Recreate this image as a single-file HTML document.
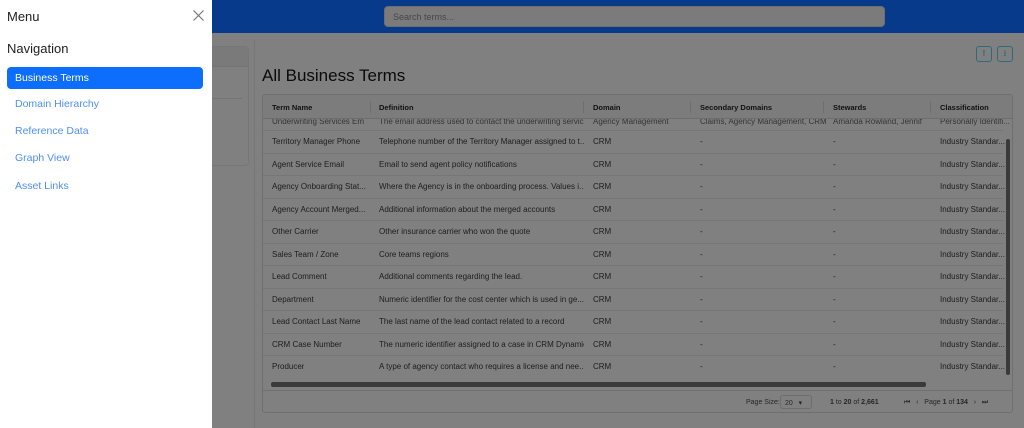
<!DOCTYPE html>
<html><head><meta charset="utf-8"><style>
*{box-sizing:border-box;margin:0;padding:0}
body{width:1024px;height:428px;overflow:hidden;position:relative;font-family:"Liberation Sans",sans-serif;background:#808080;color:#111}
.hdr{position:absolute;left:0;top:0;width:1024px;height:33px;background:#073a8a}
.search{position:absolute;left:384px;top:6px;width:501px;height:21px;background:#7b7b7b;border-radius:4px;border:1px solid #6e6e6e;font-size:9px;color:#474747;padding:5px 8px}
.lcard{position:absolute;left:150px;top:46px;width:99px;height:120px;border:1px solid #777;border-radius:4px;background:#808080}
.lcard .h{height:20px;background:#7a7a7a;border-bottom:1px solid #757575}
.lcard .b{margin:4px 6px 0 0;height:28px;border-bottom:1px solid #747474}
.vline{position:absolute;left:254px;top:40px;width:1px;height:388px;background:#777}
.btn{position:absolute;top:46px;width:16px;height:16px;border:1.5px solid #2d6b7c;border-radius:3px;color:#2d6b7c;font-size:9px;text-align:center;line-height:13px}
h1{position:absolute;left:262px;top:66px;font-size:17px;font-weight:normal;color:#0a0a0a}
.tbl{position:absolute;left:262px;top:94px;width:751px;height:319px;border:1px solid #6f6f6f;border-radius:3px;background:#808080;overflow:hidden}
.th{position:absolute;top:0;left:0;right:0;height:24px;background:#7c7c7c;border-bottom:1px solid #6d6d6d;font-size:7.5px;font-weight:bold;color:#111;z-index:2}
.th span,.row span{position:absolute;top:8px;white-space:nowrap;overflow:hidden}
.row{position:absolute;left:0;width:740px;height:22.5px;border-bottom:1px solid #767676;font-size:8px;color:#1c1c1c}
.row span{top:6px}
.row span:nth-child(2){width:205px}
.sep{position:absolute;top:6px;width:1px;height:12px;background:#6e6e6e}
.hs{position:absolute;left:8px;top:287px;width:655px;height:5px;background:#3a3a3a;border-radius:2px}
.vs{position:absolute;left:743px;top:44px;width:4px;height:236px;background:#3a3a3a;border-radius:2px}
.foot{position:absolute;left:0;right:0;top:295px;height:24px;border-top:1px solid #707070;font-size:7px;color:#262626}
.foot span{position:absolute;top:8px;white-space:nowrap}
.side{position:absolute;left:0;top:0;width:212px;height:428px;background:#fff}
.side .t{position:absolute;left:7px;top:9px;font-size:13px;color:#222}
.side .x{position:absolute;left:193px;top:10px;width:11px;height:11px}
.side .n{position:absolute;left:7px;top:41px;font-size:13px;color:#222}
.act{position:absolute;left:7px;top:67px;width:196px;height:22px;background:#0d6efd;border-radius:4px;color:#fff;font-size:10.5px;padding:5px 8px}
.lk{position:absolute;left:15px;font-size:10.5px;color:#4f8ff7}
</style></head><body>
<div class="hdr"></div>
<div class="search">Search terms...</div>
<div class="lcard"><div class="h"></div><div class="b"></div></div>
<div class="vline"></div>
<div class="btn" style="left:976px">⭱</div>
<div class="btn" style="left:997px">⭳</div>
<h1>All Business Terms</h1>
<div class="tbl">
<div class="th"><span style="left:9px">Term Name</span><span style="left:116px">Definition</span><span style="left:330px">Domain</span><span style="left:437px">Secondary Domains</span><span style="left:570px">Stewards</span><span style="left:677px">Classification</span>
<i class="sep" style="left:107px"></i><i class="sep" style="left:320px"></i><i class="sep" style="left:427px"></i><i class="sep" style="left:560px"></i><i class="sep" style="left:667px"></i></div>
<div class="row" style="top:13px;color:#333"><span style="left:9px;top:9px">Underwriting Services Em</span><span style="left:116px;top:9px">The email address used to contact the underwriting servic</span><span style="left:330px;top:9px">Agency Management</span><span style="left:437px;top:9px">Claims, Agency Management, CRM</span><span style="left:570px;top:9px">Amanda Rowland, Jennif</span><span style="left:677px;top:9px">Personally Identifi...</span></div>
<div class="row" style="top:36px"><span style="left:9px">Territory Manager Phone</span><span style="left:116px">Telephone number of the Territory Manager assigned to t...</span><span style="left:330px">CRM</span><span style="left:437px">-</span><span style="left:570px">-</span><span style="left:677px">Industry Standar...</span></div>
<div class="row" style="top:58.5px"><span style="left:9px">Agent Service Email</span><span style="left:116px">Email to send agent policy notifications</span><span style="left:330px">CRM</span><span style="left:437px">-</span><span style="left:570px">-</span><span style="left:677px">Industry Standar...</span></div>
<div class="row" style="top:81px"><span style="left:9px">Agency Onboarding Stat...</span><span style="left:116px">Where the Agency is in the onboarding process. Values i...</span><span style="left:330px">CRM</span><span style="left:437px">-</span><span style="left:570px">-</span><span style="left:677px">Industry Standar...</span></div>
<div class="row" style="top:103.5px"><span style="left:9px">Agency Account Merged...</span><span style="left:116px">Additional information about the merged accounts</span><span style="left:330px">CRM</span><span style="left:437px">-</span><span style="left:570px">-</span><span style="left:677px">Industry Standar...</span></div>
<div class="row" style="top:126px"><span style="left:9px">Other Carrier</span><span style="left:116px">Other insurance carrier who won the quote</span><span style="left:330px">CRM</span><span style="left:437px">-</span><span style="left:570px">-</span><span style="left:677px">Industry Standar...</span></div>
<div class="row" style="top:148.5px"><span style="left:9px">Sales Team / Zone</span><span style="left:116px">Core teams regions</span><span style="left:330px">CRM</span><span style="left:437px">-</span><span style="left:570px">-</span><span style="left:677px">Industry Standar...</span></div>
<div class="row" style="top:171px"><span style="left:9px">Lead Comment</span><span style="left:116px">Additional comments regarding the lead.</span><span style="left:330px">CRM</span><span style="left:437px">-</span><span style="left:570px">-</span><span style="left:677px">Industry Standar...</span></div>
<div class="row" style="top:193.5px"><span style="left:9px">Department</span><span style="left:116px">Numeric identifier for the cost center which is used in ge...</span><span style="left:330px">CRM</span><span style="left:437px">-</span><span style="left:570px">-</span><span style="left:677px">Industry Standar...</span></div>
<div class="row" style="top:216px"><span style="left:9px">Lead Contact Last Name</span><span style="left:116px">The last name of the lead contact related to a record</span><span style="left:330px">CRM</span><span style="left:437px">-</span><span style="left:570px">-</span><span style="left:677px">Industry Standar...</span></div>
<div class="row" style="top:238.5px"><span style="left:9px">CRM Case Number</span><span style="left:116px">The numeric identifier assigned to a case in CRM Dynamics</span><span style="left:330px">CRM</span><span style="left:437px">-</span><span style="left:570px">-</span><span style="left:677px">Industry Standar...</span></div>
<div class="row" style="top:261px;border-bottom:none"><span style="left:9px">Producer</span><span style="left:116px">A type of agency contact who requires a license and nee...</span><span style="left:330px">CRM</span><span style="left:437px">-</span><span style="left:570px">-</span><span style="left:677px">Industry Standar...</span></div>
<div class="vs"></div><div class="hs"></div>
<div class="foot"><span style="left:483px">Page Size:</span><span style="left:517px;top:4px;width:32px;height:14px;border:1px solid #6e6e6e;border-radius:3px;padding:3px 4px">20 &nbsp;&nbsp;▾</span><span style="left:567px"><b>1</b> to <b>20</b> of <b>2,661</b></span><span style="left:641px">⏮ &nbsp; ‹ &nbsp; Page <b>1</b> of <b>134</b> &nbsp; › &nbsp; ⏭</span></div>
</div>
<div class="side">
<div class="t">Menu</div>
<svg class="x" viewBox="0 0 11 11"><path d="M0.5 0.5L10.5 10.5M10.5 0.5L0.5 10.5" stroke="#777" stroke-width="1.2"/></svg>
<div class="n">Navigation</div>
<div class="act">Business Terms</div>
<div class="lk" style="top:98px">Domain Hierarchy</div>
<div class="lk" style="top:125px">Reference Data</div>
<div class="lk" style="top:152px">Graph View</div>
<div class="lk" style="top:180px">Asset Links</div>
</div>
</body></html>
